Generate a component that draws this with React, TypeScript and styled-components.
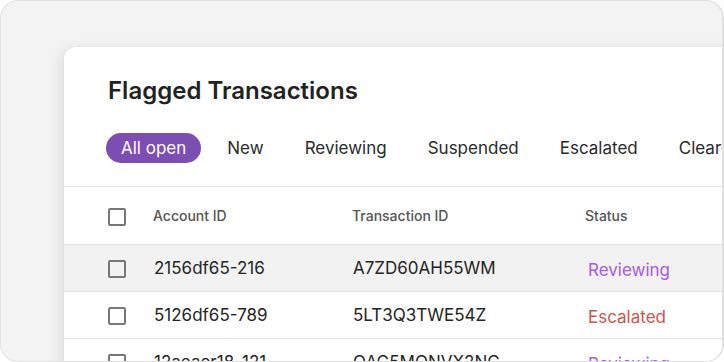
import styled, { createGlobalStyle } from "styled-components";

const GlobalStyle = createGlobalStyle`
	html, body {
		margin: 0;
		padding: 0;
		background: #ffffff;
	}
	body {
		font-family: Inter, "Noto Sans", sans-serif;
	}
	* {
		box-sizing: border-box;
	}
`;

const Frame = styled.div`
	width: 724px;
	height: 362px;
	display: flex;
	align-items: flex-start;
	padding: 46px 0 0 63px;
	background: #f3f3f3;
	border: 1px solid #e1e1e1;
	border-right: 2px solid #e1e1e1;
	border-radius: 18px;
	overflow: hidden;
`;

const Card = styled.div`
	flex-shrink: 0;
	width: 720px;
	background: #ffffff;
	border-radius: 12px 0 0 0;
	box-shadow: -4px 2px 14px rgba(0, 0, 0, 0.08), 0 0 2px rgba(0, 0, 0, 0.06);
`;

const Head = styled.div`
	padding: 29px 0 0 44px;
`;

const Title = styled.h1`
	margin: 0;
	font-size: 24px;
	line-height: 29px;
	font-weight: 600;
	color: #222222;
`;

const Tabs = styled.div`
	display: flex;
	gap: 11px;
	margin: 28px 0 0 -2px;
	padding-bottom: 23px;
	white-space: nowrap;
`;

const Tab = styled.div<{ active?: boolean }>`
	height: 30px;
	display: flex;
	align-items: center;
	padding: 0 15px;
	border-radius: 15px;
	font-size: 17px;
	color: ${(props) => (props.active ? "#ffffff" : "#2a2a2a")};
	background: ${(props) => (props.active ? "#7c4db3" : "transparent")};
`;

const Table = styled.div`
	border-top: 1px solid #e4e4e4;
`;

const Row = styled.div<{ header?: boolean; shaded?: boolean }>`
	display: grid;
	grid-template-columns: 45px 199px 233px 1fr;
	align-items: center;
	height: ${(props) => (props.header ? "58px" : "47px")};
	padding-left: 44px;
	background: ${(props) => (props.shaded ? "#f2f2f2" : "#ffffff")};
	border-bottom: 1px solid #e2e2e2;
`;

const Box = styled.span`
	width: 18px;
	height: 18px;
	border: 2px solid #777777;
	border-radius: 2px;
	margin-top: 2px;
`;

const Label = styled.span`
	font-size: 14px;
	font-weight: 500;
	color: #555555;
`;

const Cell = styled.span`
	font-size: 17px;
	color: #242424;
	padding-left: 1px;
	white-space: nowrap;
`;

const statusColors: Record<string, string> = {
	Reviewing: "#a859ee",
	Escalated: "#d2544c",
};

const Status = styled.span<{ status: string }>`
	font-size: 17px;
	padding-left: 3px;
	margin-top: 3px;
	color: ${(props) => statusColors[props.status]};
`;

const tabs = ["All open", "New", "Reviewing", "Suspended", "Escalated", "Cleared"];

const rows = [
	{ account: "2156df65-216", txn: "A7ZD60AH55WM", status: "Reviewing" },
	{ account: "5126df65-789", txn: "5LT3Q3TWE54Z", status: "Escalated" },
	{ account: "12aeaer18-121", txn: "QAG5MQNVX2NC", status: "Reviewing" },
];

const App = () => {
	return (
		<>
			<GlobalStyle />
			<Frame>
				<Card>
					<Head>
						<Title>Flagged Transactions</Title>
						<Tabs>
							{tabs.map((tab, index) => (
								<Tab key={tab} active={index === 0}>
									{tab}
								</Tab>
							))}
						</Tabs>
					</Head>
					<Table>
						<Row header>
							<Box />
							<Label>Account ID</Label>
							<Label>Transaction ID</Label>
							<Label>Status</Label>
						</Row>
						{rows.map((row, index) => (
							<Row key={row.txn} shaded={index === 0}>
								<Box />
								<Cell>{row.account}</Cell>
								<Cell>{row.txn}</Cell>
								<Status status={row.status}>{row.status}</Status>
							</Row>
						))}
					</Table>
				</Card>
			</Frame>
		</>
	);
};

export default App;
